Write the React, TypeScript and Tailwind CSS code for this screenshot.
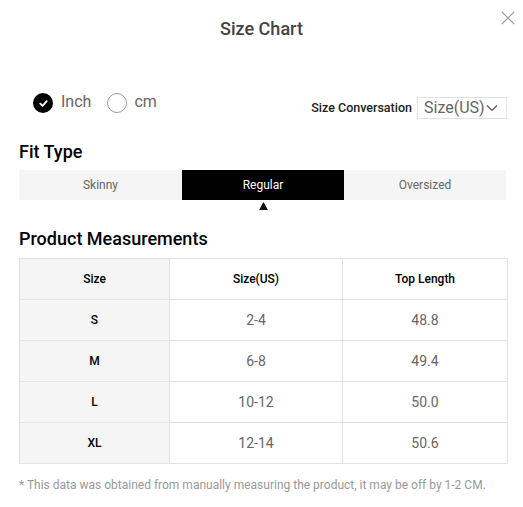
import React from "react";

const rows = [
  ["S", "2-4", "48.8"],
  ["M", "6-8", "49.4"],
  ["L", "10-12", "50.0"],
  ["XL", "12-14", "50.6"],
];

export default function App() {
  return (
    <div className="w-[523px] h-[507px] bg-white relative" style={{ fontFamily: "Roboto, 'Liberation Sans', sans-serif" }}>
      <button className="absolute left-[501px] top-[11px] w-[14px] h-[14px] text-[#9a9a9a]">
        <svg viewBox="0 0 14 14" width="14" height="14" fill="none" stroke="currentColor" strokeWidth="1.1">
          <path d="M1 1 L13 13 M13 1 L1 13" />
        </svg>
      </button>
      <div className="px-[19px]">
        <h1 className="pt-[17px] h-[24px] box-content text-center text-[18px] leading-[24px] font-medium text-[#444]">Size Chart</h1>

        <div className="mt-[52px] flex items-end justify-between -mr-[3px]">
          <div className="flex items-center pl-[14px] h-[20px]">
            <span className="w-[20px] h-[20px] rounded-full bg-black flex items-center justify-center">
              <svg viewBox="0 0 12 12" width="11" height="11" fill="none" stroke="white" strokeWidth="2" strokeLinecap="round" strokeLinejoin="round">
                <path d="M2.5 6.2 L5 8.5 L9.5 3.5" />
              </svg>
            </span>
            <span className="ml-[8px] text-[16px] leading-[20px] text-[#666] -mt-[3px]">Inch</span>
            <span className="ml-[16px] w-[20px] h-[20px] rounded-full border border-[#999] bg-white"></span>
            <span className="ml-[7px] text-[16px] leading-[20px] text-[#666] -mt-[3px]">cm</span>
          </div>
          <div className="flex items-center -mb-[6px]">
            <span className="text-[12.5px] font-medium text-[#222]">Size Conversation</span>
            <div className="ml-[5px] w-[90px] h-[22px] border border-[#e3e3e3] flex items-center pl-[6px] text-[16px] text-[#666] leading-[20px]">
              Size(US)
              <svg viewBox="0 0 12 8" width="12" height="8" fill="none" stroke="#555" strokeWidth="1.2" className="ml-[1px]">
                <path d="M1 1.5 L6 6.5 L11 1.5" />
              </svg>
            </div>
          </div>
        </div>

        <h2 className="mt-[28px] text-[18px] leading-[22px] font-medium text-black">Fit Type</h2>
        <div className="mt-[7px] flex h-[30px] w-[487px] bg-[#f5f5f5] text-[12px]">
          <div className="w-[163px] flex items-center justify-center text-[#666]">Skinny</div>
          <div className="w-[162px] flex items-center justify-center bg-black text-white">Regular</div>
          <div className="w-[162px] flex items-center justify-center text-[#666]">Oversized</div>
        </div>
        <div className="w-[487px] flex justify-center">
          <svg viewBox="0 0 10 9" width="9" height="8" className="mt-[2px] ml-[1px]">
            <path d="M5 0 L10 9 L0 9 Z" fill="#111" />
          </svg>
        </div>

        <h2 className="mt-[18px] text-[18px] leading-[22px] font-medium text-black">Product Measurements</h2>
        <table className="mt-[8px] w-[488px] border-collapse text-center table-fixed">
          <colgroup>
            <col className="w-[150px]" />
            <col className="w-[173px]" />
            <col className="w-[165px]" />
          </colgroup>
          <thead>
            <tr className="h-[41px]">
              <th className="border border-[#e2e2e2] bg-[#f5f5f5] text-[12px] font-medium text-black">Size</th>
              <th className="border border-[#e2e2e2] text-[12px] font-medium text-black">Size(US)</th>
              <th className="border border-[#e2e2e2] text-[12px] font-medium text-black">Top Length</th>
            </tr>
          </thead>
          <tbody>
            {rows.map((r) => (
              <tr key={r[0]} className="h-[41px]">
                <td className="border border-[#e2e2e2] bg-[#f5f5f5] text-[12px] font-medium text-black">{r[0]}</td>
                <td className="border border-[#e2e2e2] text-[14px] text-[#666]">{r[1]}</td>
                <td className="border border-[#e2e2e2] text-[14px] text-[#666]">{r[2]}</td>
              </tr>
            ))}
          </tbody>
        </table>
        <p className="mt-[13px] text-[12px] leading-[16px] text-[#999]">* This data was obtained from manually measuring the product, it may be off by 1-2 CM.</p>
      </div>
    </div>
  );
}
